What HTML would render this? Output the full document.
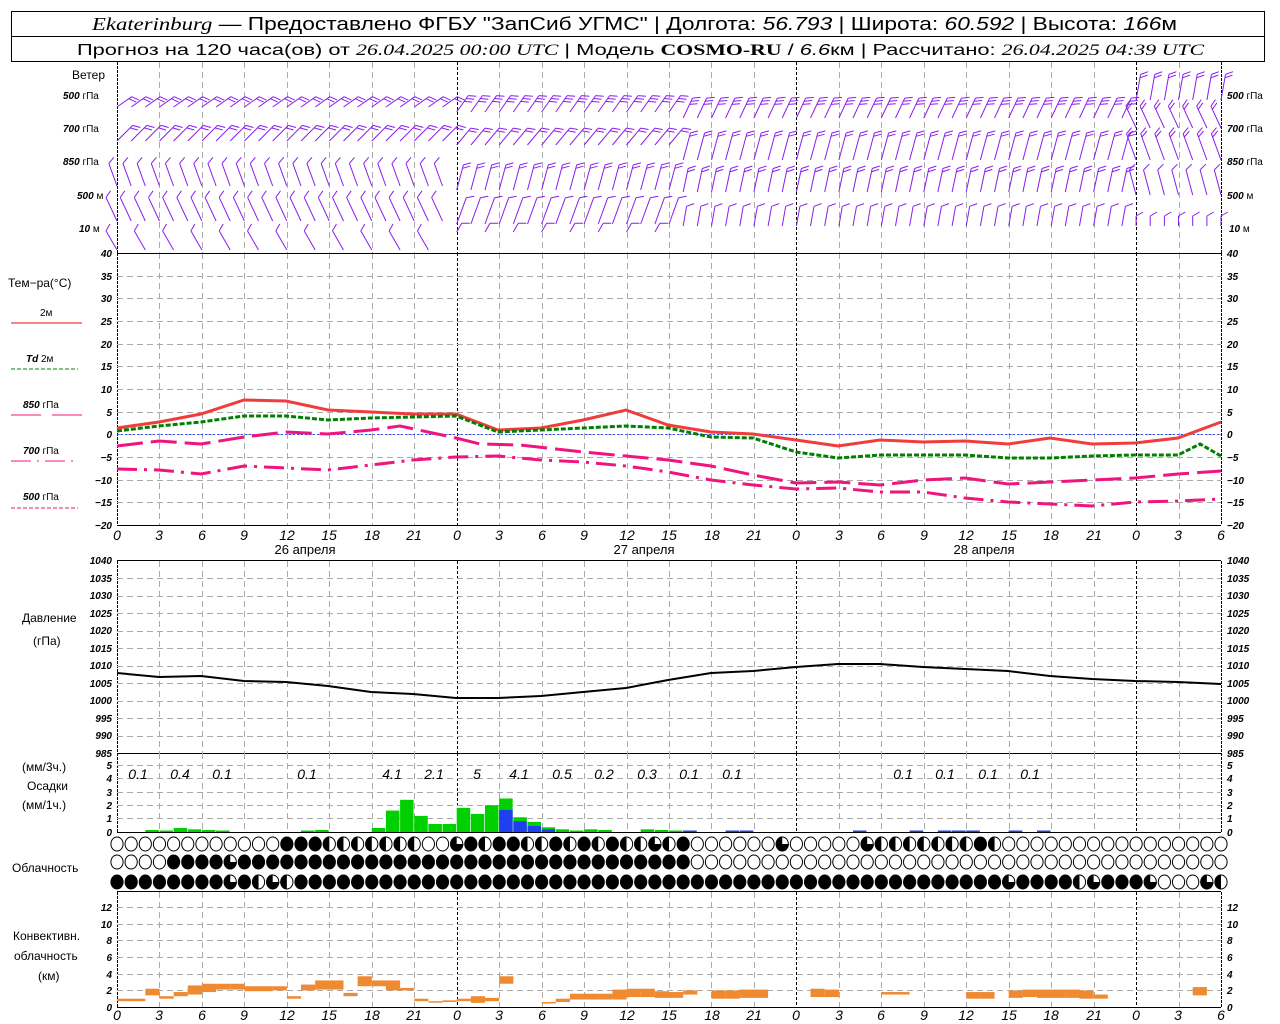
<!DOCTYPE html>
<html><head><meta charset="utf-8"><style>
html,body{margin:0;padding:0;background:#fff;width:1280px;height:1024px;overflow:hidden}
svg{display:block}
text{font-family:"Liberation Sans",sans-serif;fill:#000}
.ax{font-size:10px;font-style:italic;font-weight:bold}
.xl{font-size:14px;font-style:italic}
.lg{font-size:12px}
</style></head><body>
<svg id="s" width="1280" height="1024" viewBox="0 0 1280 1024" xmlns="http://www.w3.org/2000/svg">
<rect x="11.5" y="11.5" width="1253" height="50" fill="none" stroke="#000"/>
<line x1="11" y1="36.5" x2="1265" y2="36.5" stroke="#000"/>
<text x="92" y="30" font-size="18" textLength="1085" lengthAdjust="spacingAndGlyphs"><tspan font-family="Liberation Serif" font-style="italic">Ekaterinburg</tspan> — Предоставлено ФГБУ "ЗапСиб УГМС" | Долгота: <tspan font-style="italic">56.793</tspan> | Широта: <tspan font-style="italic">60.592</tspan> | Высота: <tspan font-style="italic">166</tspan>м</text>
<text x="77" y="55" font-size="16" textLength="1127" lengthAdjust="spacingAndGlyphs">Прогноз на 120 часа(ов) от <tspan font-family="Liberation Serif" font-style="italic">26.04.2025 00:00 UTC</tspan>  | Модель <tspan font-family="Liberation Serif" font-weight="bold">COSMO-RU</tspan> / <tspan font-style="italic">6.6</tspan>км | Рассчитано: <tspan font-family="Liberation Serif" font-style="italic">26.04.2025 04:39 UTC</tspan></text>
<g id="grid"></g>
<g id="data"></g>
<text class="lg" x="72" y="79">Ветер</text>
<g class="ax"><text x="63" y="99">500 <tspan font-style="normal" font-weight="normal">гПа</tspan></text><text x="63" y="132">700 <tspan font-style="normal" font-weight="normal">гПа</tspan></text><text x="63" y="165">850 <tspan font-style="normal" font-weight="normal">гПа</tspan></text><text x="77" y="199">500 <tspan font-style="normal" font-weight="normal">м</tspan></text><text x="79" y="232">10 <tspan font-style="normal" font-weight="normal">  м</tspan></text>
<text x="1227" y="99">500 <tspan font-style="normal" font-weight="normal">гПа</tspan></text><text x="1227" y="132">700 <tspan font-style="normal" font-weight="normal">гПа</tspan></text><text x="1227" y="165">850 <tspan font-style="normal" font-weight="normal">гПа</tspan></text><text x="1227" y="199">500 <tspan font-style="normal" font-weight="normal">м</tspan></text><text x="1229" y="232">10 <tspan font-style="normal" font-weight="normal">  м</tspan></text></g>
<text class="lg" x="8" y="287">Тем−ра(°C)</text>
<text x="40" y="316" font-size="10">2м</text>
<line x1="11" y1="323" x2="82" y2="323" stroke="#f03c3c" stroke-width="1.2"/>
<text class="ax" x="26" y="362">Td <tspan font-style="normal" font-weight="normal">  2м</tspan></text>
<line x1="11" y1="369" x2="78" y2="369" stroke="#008000" stroke-dasharray="4 2"/>
<text class="ax" x="23" y="408">850 <tspan font-style="normal" font-weight="normal">гПа</tspan></text>
<line x1="11" y1="415" x2="82" y2="415" stroke="#f0147e" stroke-dasharray="30 11"/>
<text class="ax" x="23" y="454">700 <tspan font-style="normal" font-weight="normal">гПа</tspan></text>
<line x1="11" y1="461" x2="78" y2="461" stroke="#f0147e" stroke-dasharray="20 6 2 6"/>
<text class="ax" x="23" y="500">500 <tspan font-style="normal" font-weight="normal">гПа</tspan></text>
<line x1="11" y1="508" x2="78" y2="508" stroke="#f0147e" stroke-dasharray="4 2"/>
<text class="lg" x="22" y="622">Давление</text>
<text class="lg" x="33" y="645">(гПа)</text>
<text class="lg" x="22" y="771">(мм/3ч.)</text>
<text class="lg" x="27" y="790">Осадки</text>
<text class="lg" x="22" y="809">(мм/1ч.)</text>
<text class="lg" x="12" y="872">Облачность</text>
<text class="lg" x="13" y="940">Конвективн.</text>
<text class="lg" x="14" y="960">облачность</text>
<text class="lg" x="38" y="980">(км)</text>
<g class="ax" text-anchor="end"><text x="112" y="257">40</text><text x="112" y="280">35</text><text x="112" y="302">30</text><text x="112" y="325">25</text><text x="112" y="348">20</text><text x="112" y="370">15</text><text x="112" y="393">10</text><text x="112" y="416">5</text><text x="112" y="438">0</text><text x="112" y="461">−5</text><text x="112" y="484">−10</text><text x="112" y="506">−15</text><text x="112" y="529">−20</text>
<text x="112" y="564">1040</text><text x="112" y="582">1035</text><text x="112" y="599">1030</text><text x="112" y="617">1025</text><text x="112" y="634">1020</text><text x="112" y="652">1015</text><text x="112" y="669">1010</text><text x="112" y="687">1005</text><text x="112" y="704">1000</text><text x="112" y="722">995</text><text x="112" y="739">990</text><text x="112" y="757">985</text>
<text x="112" y="769">5</text><text x="112" y="782">4</text><text x="112" y="796">3</text><text x="112" y="809">2</text><text x="112" y="822">1</text><text x="112" y="836">0</text>
<text x="112" y="911">12</text><text x="112" y="928">10</text><text x="112" y="944">8</text><text x="112" y="961">6</text><text x="112" y="978">4</text><text x="112" y="994">2</text><text x="112" y="1011">0</text></g>
<g class="ax"><text x="1227" y="257">40</text><text x="1227" y="280">35</text><text x="1227" y="302">30</text><text x="1227" y="325">25</text><text x="1227" y="348">20</text><text x="1227" y="370">15</text><text x="1227" y="393">10</text><text x="1227" y="416">5</text><text x="1227" y="438">0</text><text x="1227" y="461">−5</text><text x="1227" y="484">−10</text><text x="1227" y="506">−15</text><text x="1227" y="529">−20</text>
<text x="1227" y="564">1040</text><text x="1227" y="582">1035</text><text x="1227" y="599">1030</text><text x="1227" y="617">1025</text><text x="1227" y="634">1020</text><text x="1227" y="652">1015</text><text x="1227" y="669">1010</text><text x="1227" y="687">1005</text><text x="1227" y="704">1000</text><text x="1227" y="722">995</text><text x="1227" y="739">990</text><text x="1227" y="757">985</text>
<text x="1227" y="769">5</text><text x="1227" y="782">4</text><text x="1227" y="796">3</text><text x="1227" y="809">2</text><text x="1227" y="822">1</text><text x="1227" y="836">0</text>
<text x="1227" y="911">12</text><text x="1227" y="928">10</text><text x="1227" y="944">8</text><text x="1227" y="961">6</text><text x="1227" y="978">4</text><text x="1227" y="994">2</text><text x="1227" y="1011">0</text></g>
<g class="xl" text-anchor="middle"><text x="117" y="540">0</text><text x="159" y="540">3</text><text x="202" y="540">6</text><text x="244" y="540">9</text><text x="287" y="540">12</text><text x="329" y="540">15</text><text x="372" y="540">18</text><text x="414" y="540">21</text><text x="457" y="540">0</text><text x="499" y="540">3</text><text x="542" y="540">6</text><text x="584" y="540">9</text><text x="627" y="540">12</text><text x="669" y="540">15</text><text x="712" y="540">18</text><text x="754" y="540">21</text><text x="796" y="540">0</text><text x="839" y="540">3</text><text x="881" y="540">6</text><text x="924" y="540">9</text><text x="966" y="540">12</text><text x="1009" y="540">15</text><text x="1051" y="540">18</text><text x="1094" y="540">21</text><text x="1136" y="540">0</text><text x="1178" y="540">3</text><text x="1221" y="540">6</text>
<text x="117" y="1020">0</text><text x="159" y="1020">3</text><text x="202" y="1020">6</text><text x="244" y="1020">9</text><text x="287" y="1020">12</text><text x="329" y="1020">15</text><text x="372" y="1020">18</text><text x="414" y="1020">21</text><text x="457" y="1020">0</text><text x="499" y="1020">3</text><text x="542" y="1020">6</text><text x="584" y="1020">9</text><text x="627" y="1020">12</text><text x="669" y="1020">15</text><text x="712" y="1020">18</text><text x="754" y="1020">21</text><text x="796" y="1020">0</text><text x="839" y="1020">3</text><text x="881" y="1020">6</text><text x="924" y="1020">9</text><text x="966" y="1020">12</text><text x="1009" y="1020">15</text><text x="1051" y="1020">18</text><text x="1094" y="1020">21</text><text x="1136" y="1020">0</text><text x="1178" y="1020">3</text><text x="1221" y="1020">6</text></g>
<g font-size="13" text-anchor="middle"><text x="305" y="554">26 апреля</text><text x="644" y="554">27 апреля</text><text x="984" y="554">28 апреля</text></g>
<g class="xl" font-size="13" text-anchor="middle"><text x="138" y="779">0.1</text><text x="180" y="779">0.4</text><text x="222" y="779">0.1</text><text x="307" y="779">0.1</text><text x="392" y="779">4.1</text><text x="434" y="779">2.1</text><text x="477" y="779">5</text><text x="519" y="779">4.1</text><text x="562" y="779">0.5</text><text x="604" y="779">0.2</text><text x="647" y="779">0.3</text><text x="689" y="779">0.1</text><text x="732" y="779">0.1</text><text x="903" y="779">0.1</text><text x="945" y="779">0.1</text><text x="988" y="779">0.1</text><text x="1030" y="779">0.1</text></g>
</svg>
<script>
var NS="http://www.w3.org/2000/svg",G=document.getElementById('grid'),D=document.getElementById('data');
function X(h){return 117+h*14.154;}
function el(p,t,a){var e=document.createElementNS(NS,t);for(var k in a)e.setAttribute(k,a[k]);p.appendChild(e);return e;}
function ln(p,x1,y1,x2,y2,c,w,da){var a={x1:x1,y1:y1,x2:x2,y2:y2,stroke:c,'stroke-width':w||1};if(da)a['stroke-dasharray']=da;return el(p,'line',a);}
function vgrid(y0,y1){for(var h=0;h<=78;h+=3){var x=Math.round(X(h))+.5;if(h==0||h==78){ln(G,x,y0,x,y1,'#000',1,'3 1');}else if(h%24==0){ln(G,x,y0,x,y1,'#000',1,'3 2');}else ln(G,x,y0,x,y1,'#aaa',1,'6 4');}}
function hgrid(ys){ys.forEach(function(y){ln(G,117,y+.5,1221,y+.5,'#aaa',1,'6 4');});}
vgrid(62,253);
vgrid(253,525);hgrid([276,298,321,344,366,389,412,434,457,480,502]);
ln(G,117,253.5,1221,253.5,'#000');ln(G,117,525.5,1221,525.5,'#000');
vgrid(561,753);hgrid([578,596,613,631,648,666,683,701,718,736]);
ln(G,117,560.5,1221,560.5,'#000');ln(G,117,753.5,1221,753.5,'#000');
vgrid(753,832);hgrid([765,778,792,805,818]);ln(G,117,832.5,1221,832.5,'#000');
vgrid(892,1008);hgrid([907,924,940,957,974,990]);ln(G,117,891.5,1221,891.5,'#000');ln(G,117,1007.5,1221,1007.5,'#000');
ln(G,117,434.5,1221,434.5,'#3050ff',1,'2 2');
function poly(pts,c,w,da){var d='M'+pts.map(function(p){return p.join(',')}).join('L');var a={d:d,fill:'none',stroke:c,'stroke-width':w};if(da)a['stroke-dasharray']=da;el(D,'path',a);}
poly([[117,428],[159,422],[201,414],[244,400],[286,401],[328,410],[371,412],[413,414],[456,414],[498,430],[541,428],[583,420],[626,410],[668,425],[711,432],[753,434],[796,440],[838,446],[880,440],[923,442],[965,441],[1008,444],[1050,438],[1092,444],[1135,443],[1178,438],[1221,422]],'#f03c3c',3);
poly([[117,431],[159,426],[201,422],[244,416],[286,416],[328,420],[371,418],[413,417],[456,416],[498,432],[541,430],[583,428],[626,426],[668,428],[711,437],[753,438],[796,452],[838,458],[880,455],[923,455],[965,455],[1008,458],[1050,458],[1092,456],[1135,455],[1178,455],[1200,444],[1221,456]],'#008000',3,'5 2');
poly([[117,446],[159,441],[201,444],[244,437],[286,432],[328,434],[371,430],[400,426],[456,438],[480,444],[520,445],[583,452],[626,456],[668,460],[711,466],[753,475],[796,483],[838,482],[880,485],[923,480],[965,478],[1008,484],[1050,482],[1092,480],[1135,478],[1178,474],[1221,471]],'#f0147e',3,'26 8');
poly([[117,469],[159,470],[201,474],[244,466],[286,468],[328,470],[371,465],[413,460],[456,457],[498,456],[541,460],[583,462],[626,466],[668,472],[711,480],[753,485],[796,489],[838,488],[880,492],[923,492],[965,498],[1008,502],[1050,504],[1092,506],[1135,502],[1178,501],[1221,499]],'#f0147e',3,'20 7 3 7');
poly([[117,673],[159,677],[201,676],[244,681],[286,682],[328,686],[371,692],[413,694],[456,698],[498,698],[541,696],[583,692],[626,688],[668,680],[711,673],[753,671],[796,667],[838,664],[880,664],[923,667],[965,669],[1008,671],[1050,676],[1092,679],[1135,681],[1178,682],[1221,684]],'#000',2);
var pr=[[2,.15],[3,.1],[4,.3],[5,.2],[6,.15],[7,.1],[13,.1],[14,.15],[18,.3],[19,1.6],[20,2.4],[21,1.2],[22,.6],[23,.6],[24,1.8],[25,1.35],[26,2],[27,2.5,1.65],[28,1.1,.8],[29,.75,.45],[30,.35,.2],[31,.2],[32,.05],[33,.2],[34,.15],[37,.2],[38,.15],[39,.1],[40,.1,.1],[43,.1,.1],[44,.1,.1],[52,.05,.05],[56,.05,.05],[58,.05,.05],[59,.05,.05],[60,.05,.05],[63,.05,.05],[65,.05,.05]];
pr.forEach(function(p){var x=X(p[0]),w=13.5;var hh=Math.max(1.5,p[1]*13.4);el(D,'rect',{x:x,y:832-hh,width:w,height:hh,fill:'#00d000'});if(p[2]){var hb=Math.max(1.5,p[2]*13.4);el(D,'rect',{x:x,y:832-hb,width:w,height:hb,fill:'#2040f0'});}});
var cv=[[0,.7,1],[1,.7,1],[2,1.4,2.2],[3,1,1.3],[4,1.3,1.8],[5,1.5,2.6],[6,1.8,2.8],[7,2.1,2.8],[8,2.1,2.8],[9,1.9,2.5],[10,1.9,2.5],[11,2,2.5],[12,1,1.3],[13,2,2.7],[14,2.1,3.2],[15,2.1,3.2],[16,1.3,1.7],[17,2.5,3.7],[18,2.5,3.2],[19,2,3.2],[20,2,2.3],[21,.7,1],[22,.6,.7],[23,.6,.8],[24,.7,1],[25,.5,1.3],[26,.7,1.1],[27,2.8,3.7],[30,.5,.6],[31,.6,1],[32,.9,1.6],[33,.9,1.6],[34,.9,1.6],[35,.9,2.1],[36,1.2,2.2],[37,1.2,2.2],[38,1.1,1.9],[39,1.1,1.8],[40,1.5,2],[42,1,2],[43,1,2],[44,1.1,2.1],[45,1.1,2.1],[49,1.2,2.2],[50,1.2,2.1],[54,1.5,1.8],[55,1.5,1.8],[60,1,1.8],[61,1,1.8],[63,1.1,2],[64,1.2,2.1],[65,1.1,2.1],[66,1.1,2.1],[67,1.1,2.1],[68,1,2],[69,1,1.5],[76,1.4,2.4]];
cv.forEach(function(c){var y0=1007-c[2]*8.3,y1=1007-c[1]*8.3;el(D,'rect',{x:X(c[0]),y:y0,width:14.2,height:Math.max(1.5,y1-y0),fill:'#f08a30'});});
function rowstr(){var a=[];for(var i=0;i<79;i++)a.push('0');return a;}
var r1=rowstr(),r2=rowstr(),r3=rowstr();
"111hhhhhhh00q1h11hh1h1h1hhqh1".split('').forEach(function(c,i){r1[12+i]=c;});r1[47]='q';
"qhhhhhhh1h".split('').forEach(function(c,i){r1[53+i]=c;});
for(var i=4;i<=40;i++)r2[i]='1';r2[8]='q';
for(i=0;i<=78;i++)r3[i]='1';r3[8]='q';r3[10]='h';r3[11]='q';r3[12]='h';r3[63]='q';r3[68]='h';r3[69]='q';r3[73]='q';r3[74]='0';r3[75]='0';r3[76]='0';r3[77]='q';r3[78]='h';
function cloud(cx,cy,t){var rx=6.6,ry=7.5;
if(t=='1'){el(D,'ellipse',{cx:cx,cy:cy,rx:rx,ry:ry,fill:'#000'});return;}
el(D,'ellipse',{cx:cx,cy:cy,rx:rx-.5,ry:ry-.5,fill:'#fff',stroke:'#000','stroke-width':1});
if(t=='h')el(D,'path',{d:'M'+cx+','+(cy-ry)+'A'+rx+','+ry+' 0 0 0 '+cx+','+(cy+ry)+'Z',fill:'#000'});
if(t=='q')el(D,'path',{d:'M'+cx+','+cy+'L'+cx+','+(cy-ry)+'A'+rx+','+ry+' 0 1 0 '+(cx+rx)+','+cy+'Z',fill:'#000'});}
for(i=0;i<79;i++){cloud(X(i),844,r1[i]);cloud(X(i),862,r2[i]);cloud(X(i),882,r3[i]);}
var W=el(D,'g',{stroke:'#8a1cf0','stroke-width':1,fill:'none'});
function barb(x,y,ang,n,L){L=L||24;var a=ang*Math.PI/180,dx=Math.sin(a),dy=-Math.cos(a);var tx=x+dx*L,ty=y+dy*L;var d='M'+x.toFixed(1)+','+y.toFixed(1)+'L'+tx.toFixed(1)+','+ty.toFixed(1);
var fa=(ang+60)*Math.PI/180,fx=Math.sin(fa)*8,fy=-Math.cos(fa)*8;
for(var k=0;k<n;k++){var px=tx-dx*k*3.5,py=ty-dy*k*3.5;d+='M'+px.toFixed(1)+','+py.toFixed(1)+'l'+fx.toFixed(1)+','+fy.toFixed(1);}
el(W,'path',{d:d});}
for(var h=0;h<=78;h++){var x=X(h);
 if(h<24){barb(x,107,55,2,18);barb(x,141,45,2,22);barb(x,186,-20,1,24);barb(x,221,-25,1,26);if(h%2==0)barb(x,250,-30,1,22);}
 else if(h<40){barb(x,112,35,3,20);barb(x,145,40,2,22);barb(x,190,15,2,26);barb(x,224,20,1,28);if(h%2==0)barb(x,232,30,1,10);}
 else if(h<72){barb(x,118,25,3,22);barb(x,160,15,2,28);barb(x,192,12,2,24);barb(x,226,10,1,20);}
 else {barb(x,100,10,2,26);barb(x,128,-25,2,24);barb(x,160,-20,2,28);barb(x,195,-15,1,26);barb(x,226,0,1,10);}
}
</script>
</body></html>
